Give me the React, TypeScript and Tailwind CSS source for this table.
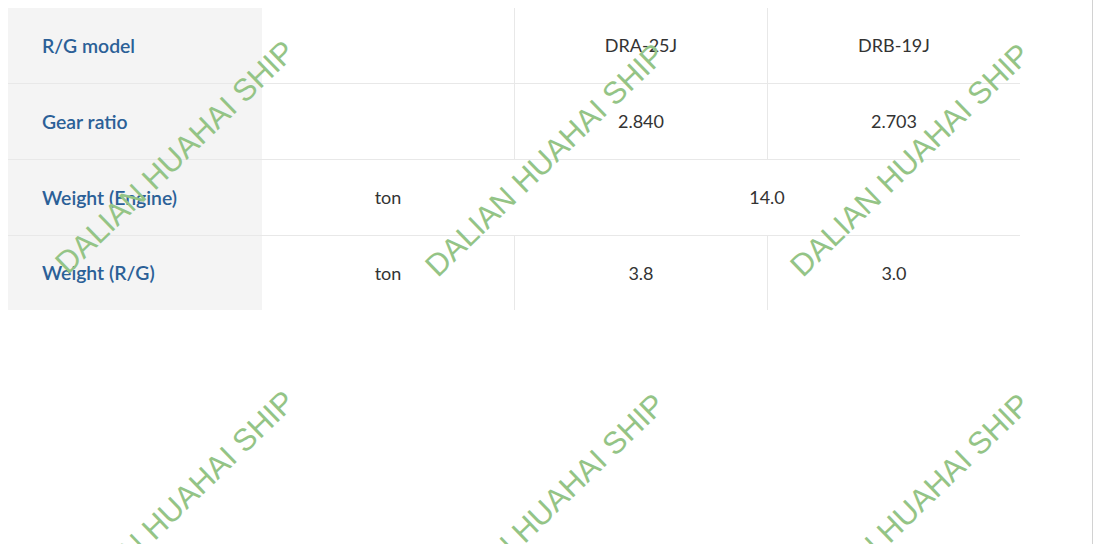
import React from "react";

const rows = [
  { label: "R/G model", unit: "", a: "DRA-25J", b: "DRB-19J" },
  { label: "Gear ratio", unit: "", a: "2.840", b: "2.703" },
  { label: "Weight (Engine)", unit: "ton", span: "14.0" },
  { label: "Weight (R/G)", unit: "ton", a: "3.8", b: "3.0" },
];

const marks = [
  { x: 175, y: 157 },
  { x: 545, y: 160 },
  { x: 910, y: 160 },
  { x: 175, y: 507 },
  { x: 545, y: 510 },
  { x: 910, y: 510 },
];

export default function App() {
  return (
    <div className="relative w-[1093px] h-[544px] overflow-hidden bg-white border-r border-[#d2d2d2]" style={{ fontFamily: "Lato, 'Noto Sans', sans-serif" }}>
      <div className="pt-2 pl-2">
        <div className="w-[1012px] flex flex-col">
          {rows.map((r, i) => (
            <div key={i} className={`flex ${i < rows.length - 1 ? "h-[76px] border-b border-[#e8e8e8]" : "h-[74px]"}`}>
              <div className="w-[254px] bg-[#f4f4f4] flex items-center pl-[34px] text-[19.4px] font-semibold text-[#2b6097]">
                {r.label}
              </div>
              <div className="w-[252px] flex items-center justify-center text-[18px] text-[#333]">{r.unit}</div>
              {r.span ? (
                <div className="w-[506px] flex items-center justify-center text-[18px] text-[#333]">{r.span}</div>
              ) : (
                <>
                  <div className="w-[253px] border-l border-[#e8e8e8] flex items-center justify-center text-[18px] text-[#333]">{r.a}</div>
                  <div className="w-[253px] border-l border-[#e8e8e8] flex items-center justify-center text-[18px] text-[#333]">{r.b}</div>
                </>
              )}
            </div>
          ))}
        </div>
      </div>
      {marks.map((m, i) => (
        <div
          key={i}
          className="absolute pointer-events-none whitespace-nowrap text-[31px] leading-none text-[#94c486]"
          style={{
            left: m.x,
            top: m.y,
            transform: "translate(-50%, -50%) rotate(-44deg)",
            fontFamily: "'Liberation Sans', Arial, sans-serif",
          }}
        >
          DALIAN HUAHAI SHIP
        </div>
      ))}
    </div>
  );
}
